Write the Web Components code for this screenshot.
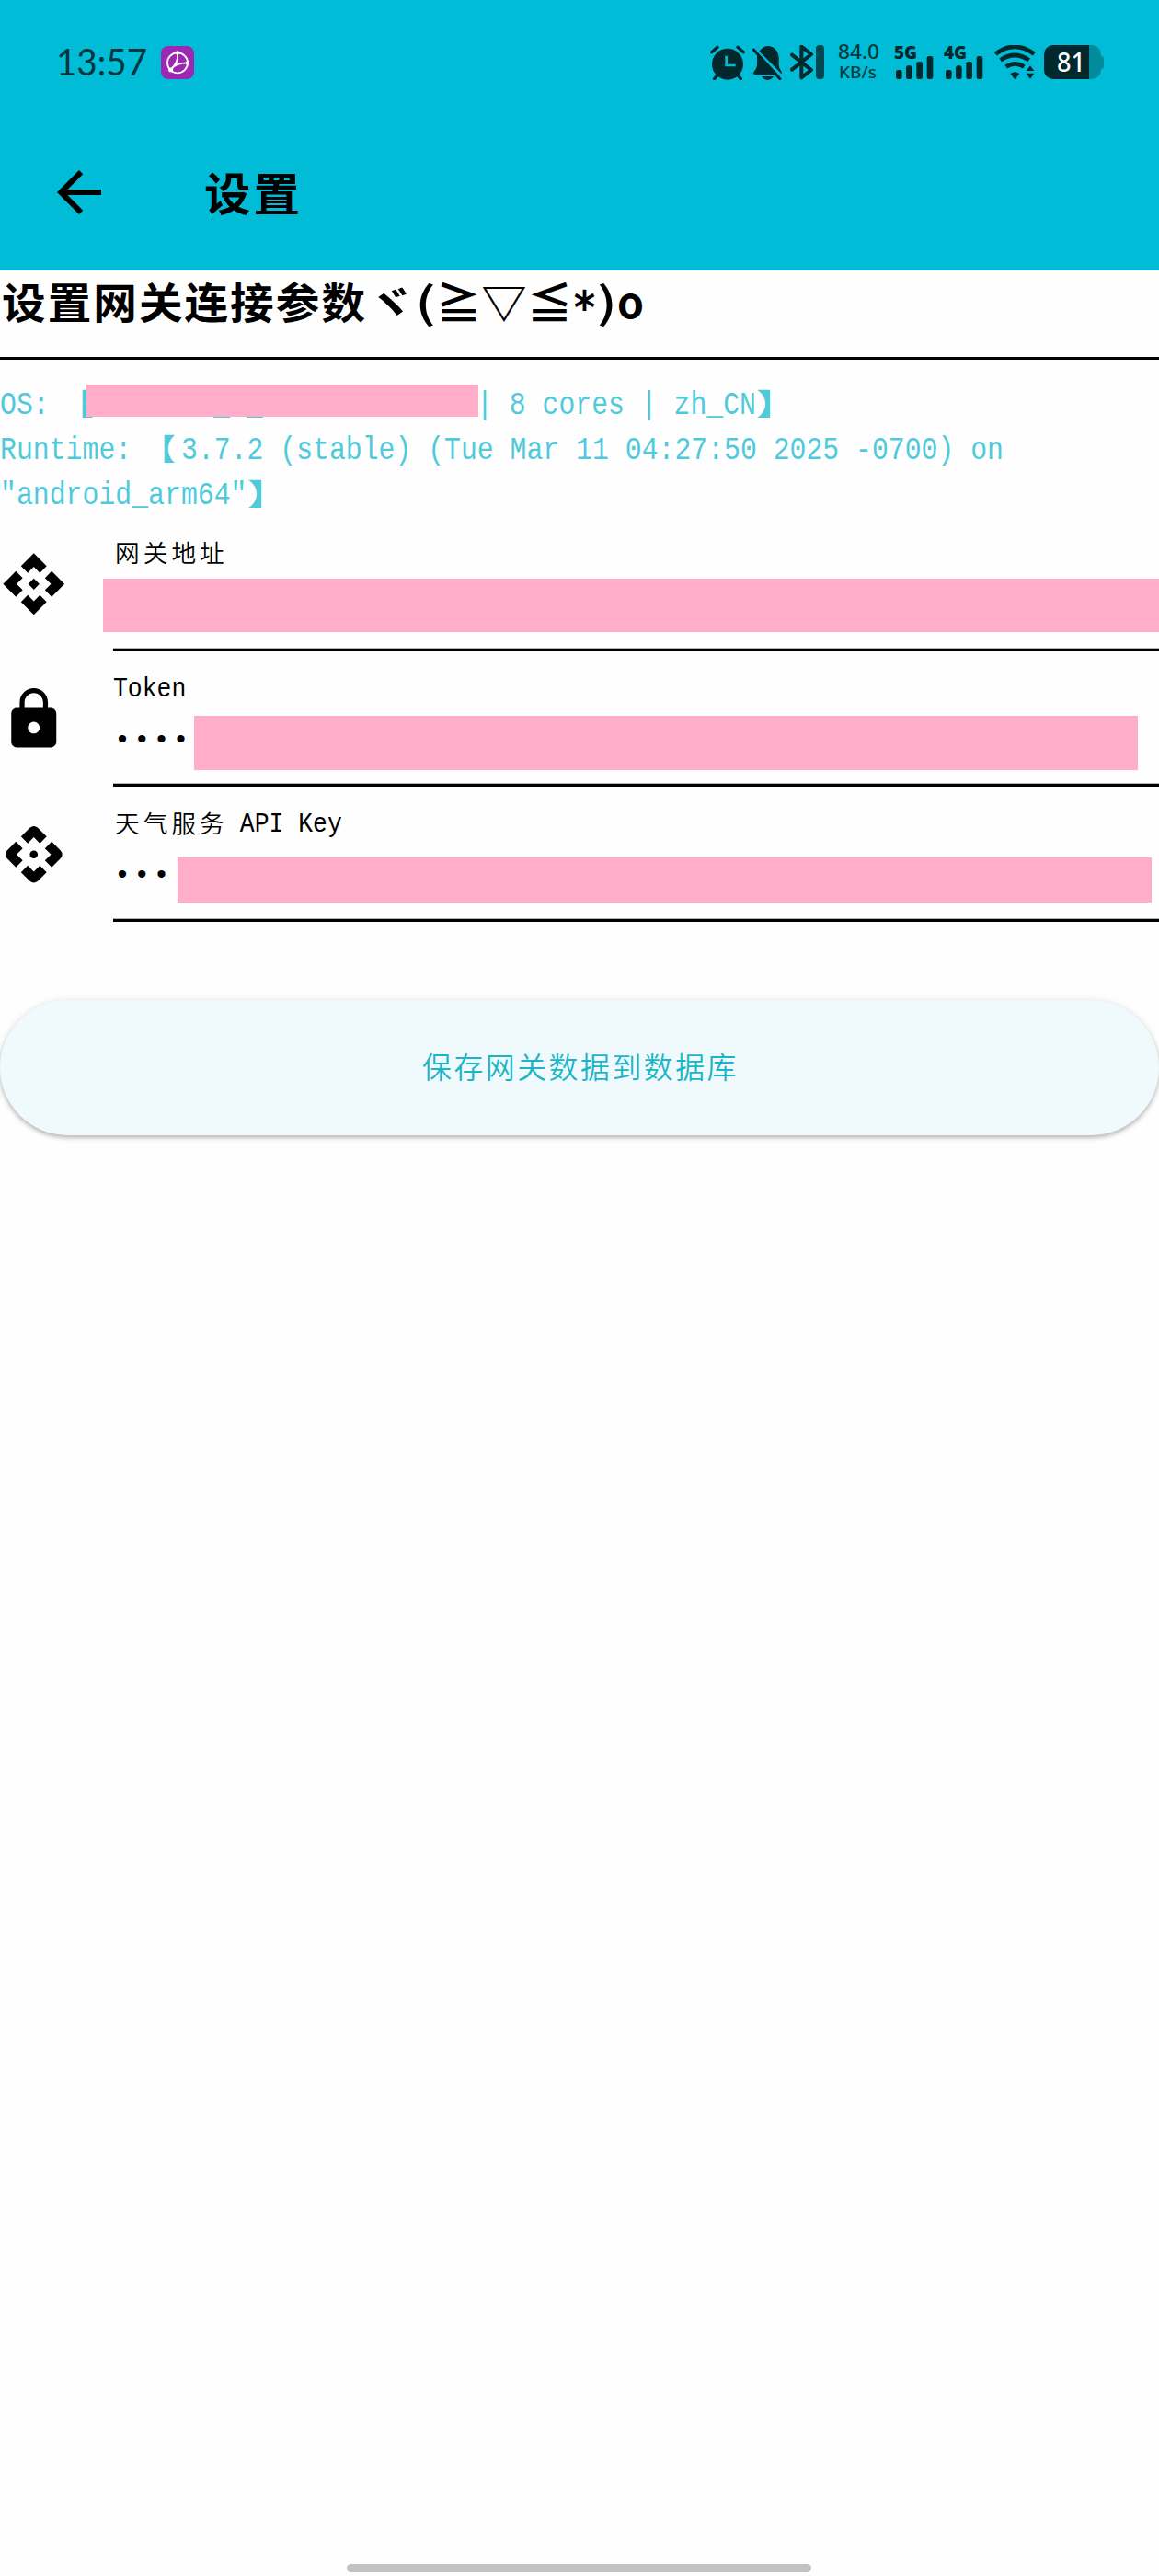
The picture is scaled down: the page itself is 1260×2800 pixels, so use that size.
<!DOCTYPE html>
<html lang="zh-CN">
<head>
<meta charset="utf-8">
<title>设置</title>
<style>
html, body { margin: 0; background: #fefefe; }
body { width: 1260px; height: 2800px; overflow: hidden; }
</style>
</head>
<body>
<settings-page></settings-page>
<script>
const define = (name, html, setup) => customElements.define(name, class extends HTMLElement {
  connectedCallback() {
    if (this.shadowRoot) return;
    const t = document.createElement('template');
    t.innerHTML = typeof html === 'function' ? html(this) : html;
    this.attachShadow({ mode: 'open' }).append(t.content.cloneNode(true));
    if (setup) setup(this);
  }
});

const roundArm = [0, 90, 180, 270].map(r => `<path transform="rotate(${r} 12 12)" d="M12 5.9l2.15 2.15 2.4-2.4-3.15-3.15q-1.4-1.15-2.8 0L7.45 5.65l2.4 2.4z"/>`).join('');
const sharpArm = [0, 90, 180, 270].map(r => `<path transform="rotate(${r} 12 12)" d="M12 5.9l2.15 2.15 2.4-2.4L12 1.1 7.45 5.65l2.4 2.4z"/>`).join('');

const ICONS = {
  back: ['0 0 24 24', '<path d="M20 11H7.83l5.59-5.59L12 4l-8 8 8 8 1.41-1.41L7.83 13H20v-2z"/>'],
  api: ['0 0 24 24', '<path d="M12 10l2 2-2 2-2-2z"/>' + sharpArm],
  apiRound: ['0 0 24 24', '<circle cx="12" cy="12" r="1.42"/>' + roundArm],
  lock: ['0 0 24 24', '<path d="M18 8h-1V6c0-2.76-2.24-5-5-5S7 3.24 7 6v2H6c-1.1 0-2 .9-2 2v10c0 1.1.9 2 2 2h12c1.1 0 2-.9 2-2V10c0-1.1-.9-2-2-2zm-6 9.1c-1.1 0-2.1-1-2.1-2.1s1-2.1 2.1-2.1 2.1 1 2.1 2.1-1 2.1-2.1 2.1zM15.3 8H8.7V6c0-1.82 1.48-3.3 3.3-3.3s3.3 1.48 3.3 3.3v2z"/>'],
  app: ['0 0 108 108', '<rect width="108" height="108" rx="24" fill="#9c27b0"/><g fill="none" stroke="#fff" stroke-width="5.5"><circle cx="54" cy="55" r="33"/><path d="M54 24Q58 54 31 78M31 78Q48 54 88 55"/></g><g fill="#fff"><circle cx="54" cy="22" r="6.5"/><circle cx="87" cy="55" r="6.5"/><circle cx="32" cy="78" r="7.5"/></g>'],
  alarm: ['60 87 114 114', '<circle cx="117" cy="149" r="51"/><path d="M65 110L84 94M169 110L150 94M83 186l-9 11M151 186l9 11" stroke="currentColor" stroke-width="10" stroke-linecap="round"/><path d="M113 122V153H143" fill="none" stroke="#00bcd7" stroke-width="8"/>'],
  bell: ['201 87 99 114', '<path d="M216 124C224 100 238 90 251 90C272 90 286 107 287 128V152Q287 163 296 174Q300 184 288 184H210Q201 182 206 173Q216 163 216 150Z"/><path d="M231 189H270Q264 200 251 201Q237 200 231 189Z"/><path d="M208 98L298 190" stroke="#00bcd7" stroke-width="9"/><path d="M205 102L291 197" stroke="currentColor" stroke-width="9" stroke-linecap="round"/>'],
  bt: ['324 87 111 114', '<path d="M330 119L393 168L361 193V92L393 117L330 167" fill="none" stroke="currentColor" stroke-width="12" stroke-linejoin="round" stroke-linecap="round"/><rect x="408" y="87" width="27" height="111" rx="11" fill="#004750"/>'],
  wifi: ['359 87 135 114', '<g fill="none" stroke="currentColor" stroke-width="14"><path d="M363 116Q425 69 489 116"/><path d="M379 136Q425 104 472 136"/><path d="M397 158Q426 138 456 158"/></g><path d="M411 180Q426 169 441 180L429 196Q426 199 423 196Z"/><path d="M476 154L489 171H463ZM476 197L489 179H463Z"/>']
};

define('ui-icon', el => {
  const [box, body] = ICONS[el.getAttribute('name')];
  return `<style>:host{display:block;flex:none}svg{display:block;width:100%;height:100%}</style>
    <svg viewBox="${box}" fill="currentColor">${body}</svg>`;
});

define('signal-meter', el => `<style>
  :host{display:flex;flex-direction:column;width:44px;height:38px;flex:none;color:#00282d}
  svg{display:block;width:44px;height:25px;margin-top:-3px}
  fit-text{font:800 18.5px/15px "Open Sans"}
  </style><fit-text w="25">${el.getAttribute('label')}</fit-text>
  <svg viewBox="0 0 132 75" fill="currentColor"><rect x="6" y="45" width="20" height="30" rx="7"/><rect x="39" y="31" width="20" height="44" rx="7"/><rect x="73" y="18" width="20" height="57" rx="7"/><rect x="107" y="0" width="20" height="75" rx="7"/></svg>`);

define('battery-badge', `<style>
  :host{display:flex;align-items:center;width:65px;height:37px;flex:none}
  .cell{width:62px;height:37px;border-radius:10px;overflow:hidden;display:flex;background:#028b9d}
  .level{width:49px;background:#00282d;color:#fff;display:flex;align-items:center;justify-content:center}
  .nub{width:3px;height:14px;background:#028b9d;border-radius:0 3px 3px 0}
  fit-text{font:500 29px/37px "Noto Sans";margin:-2px 0 0 10px}
  </style><div class="cell"><div class="level"><fit-text w="31">81</fit-text></div></div><div class="nub"></div>`);

define('status-bar', `<style>
  :host{display:flex;height:102px;padding:49px 60px 0 61px;box-sizing:border-box;color:#00282d;align-items:flex-start}
  .time{font:400 41.5px/38px Lato;color:#00373e;margin-top:-2px}
  .app{width:36px;height:36px;margin:1px 0 0 15px}
  .right{margin-left:auto;display:flex;align-items:flex-start}
  .al{width:38px;height:38px}.be{width:33px;height:38px;margin-left:8px}.bt{width:37px;height:38px;margin-left:8px}
  .speed{width:45px;margin:-3px 16px 0 15px;color:#003b42;display:flex;flex-direction:column;gap:2px}
  .speed fit-text{font:500 21px/20px "Noto Sans"}
  .speed fit-text + fit-text{font-size:18.5px;line-height:20px;margin-left:1px}
  signal-meter + signal-meter{margin-left:10px}
  .wf{width:45px;height:38px;margin:0 9px 0 11px}
  </style>
  <fit-text class="time" w="99">13:57</fit-text><ui-icon class="app" name="app"></ui-icon>
  <div class="right"><ui-icon class="al" name="alarm"></ui-icon><ui-icon class="be" name="bell"></ui-icon><ui-icon class="bt" name="bt"></ui-icon>
  <div class="speed"><fit-text w="45">84.0</fit-text><fit-text w="41">KB/s</fit-text></div>
  <signal-meter label="5G"></signal-meter><signal-meter label="4G"></signal-meter>
  <ui-icon class="wf" name="wifi"></ui-icon><battery-badge></battery-badge></div>`);

define('app-bar', `<style>
  :host{display:flex;align-items:center;height:192px;padding:21px 50px 0;box-sizing:border-box;color:#000}
  ui-icon{width:72px;height:72px}
  fit-text{font:700 49px/72px "Noto Sans CJK SC",sans-serif;letter-spacing:3px;margin:-1px 0 0 100px}
  </style><ui-icon name="back"></ui-icon><fit-text w="107">设置</fit-text>`);

define('page-heading', `<style>
  :host{display:flex;height:97px;box-sizing:border-box;border-bottom:3px solid #000;padding:0 0 0 2px;color:#000}
  fit-text{font:700 46px/64px "Noto Sans CJK SC",sans-serif;letter-spacing:2px}
  .sym{font-family:"Noto Sans CJK JP",sans-serif;letter-spacing:0}
  .par{font-weight:500;letter-spacing:0}
  .star{font:700 50px/82px "DejaVu Sans Mono";letter-spacing:0}
  .o{letter-spacing:0}
  </style><fit-text w="397">设置网关连接参数</fit-text><fit-text class="sym" w="52">ヾ</fit-text><fit-text class="par" w="23">(</fit-text><fit-text class="sym" w="148">≧▽≦</fit-text><fit-text class="star" w="27">*</fit-text><fit-text class="par" w="22">)</fit-text><fit-text class="o" w="29">o</fit-text>`);

define('runtime-info', `<style>
  :host{display:flex;flex-direction:column;height:170px;padding-top:25px;box-sizing:border-box;color:#50cadb;white-space:pre}
  div{display:flex;height:49px;position:relative}
  fit-text{font:400 34.5px/49px "Liberation Mono"}
  .b{font:700 32px/43px "Noto Sans CJK SC",sans-serif}
  .open{margin:0 6px 0 -6px}
  i{position:absolute;left:94px;top:2px;width:426px;height:35px;background:#ffadc9}
  </style>
  <div><fit-text w="71.6">OS: </fit-text><fit-text class="b open" w="35.8">【</fit-text><fit-text w="715">       _ _             | 8 cores | zh_CN</fit-text><fit-text class="b" w="44">】</fit-text><i></i></div>
  <div><fit-text w="161.1">Runtime: </fit-text><fit-text class="b open" w="35.8">【</fit-text><fit-text w="894">3.7.2 (stable) (Tue Mar 11 04:27:50 2025 -0700) on</fit-text></div>
  <div><fit-text w="268.5">"android_arm64"</fit-text><fit-text class="b" w="44">】</fit-text></div>`);

define('setting-field', el => {
  const a = n => el.getAttribute(n) || '';
  const [x, y, w, h] = a('mask').split(' ');
  return `<style>
  :host{display:flex;height:147px;position:relative;color:#000}
  ui-icon{width:73.5px;height:73.5px;margin-top:36.5px}
  .body{flex:1;margin-left:49px;border-bottom:3px solid #000;box-shadow:inset 0 -1px #b4b4b4;display:flex;flex-direction:column}
  .label{display:flex;height:46px;padding-top:16px}
  .cjk{font:350 26.5px/45px "Noto Sans CJK SC",sans-serif;letter-spacing:4px;margin:0 -2px 0 2px}
  .lat{font:400 29.5px/50px "Liberation Mono";white-space:pre}
  .dots{font:400 30px/44px "Liberation Mono";letter-spacing:3.2px;margin:13px 0 0 1.5px}
  i{position:absolute;left:${x}px;top:${y}px;width:${w}px;height:${h}px;background:#ffadc9}
  </style><ui-icon name="${a('icon')}"></ui-icon><div class="body"><div class="label">
  ${a('zh') ? `<fit-text class="cjk" w="122.8">${a('zh')}</fit-text>` : ''}${a('en') ? `<fit-text class="lat" w="${a('en').length * 15.85}">${a('en')}</fit-text>` : ''}</div>
  ${a('dots') ? `<fit-text class="dots" w="${a('dots').length * 21.2}">${a('dots')}</fit-text>` : ''}</div><i></i>`;
});

define('save-button', `<style>
  :host{display:flex;align-items:center;justify-content:center;height:147px;margin-top:85px;border-radius:73.5px;background:#f0fafc;
  box-shadow:0 3px 4px rgba(0,0,0,.2),0 1px 8px rgba(0,0,0,.12);color:#1cb5c8}
  fit-text{font:350 31.5px/60px "Noto Sans CJK SC",sans-serif;letter-spacing:2.5px;margin:-5px 0 0 2px}
  </style><fit-text w="344">保存网关数据到数据库</fit-text>`);

define('settings-page', `<style>
  :host{display:flex;flex-direction:column;width:1260px;height:2800px}
  header{background:#00bcd7;height:294px}
  main{flex:1}
  footer{height:13px;display:flex;justify-content:center}
  footer div{width:505px;height:9px;border-radius:5px;background:#c2c2c2;margin-right:1px}
  </style>
  <header><status-bar></status-bar><app-bar></app-bar></header>
  <main><page-heading></page-heading><runtime-info></runtime-info>
  <setting-field icon="api" zh="网关地址" mask="112 68 1148 58"></setting-field>
  <setting-field icon="lock" en="Token" dots="••••" mask="211 70 1026 59"></setting-field>
  <setting-field icon="apiRound" zh="天气服务" en=" API Key" dots="•••" mask="193 77 1059 49"></setting-field>
  <save-button></save-button></main>
  <footer><div></div></footer>`);

/* Text whose advance is fitted horizontally to the "w" attribute, in pixels. */
define('fit-text', `<style>:host{display:block;flex:none}span{display:block;width:max-content;white-space:pre;transform-origin:0 50%}</style><span><slot></slot></span>`, el => {
  const w = parseFloat(el.getAttribute('w'));
  const s = el.shadowRoot.querySelector('span');
  const k = w / s.getBoundingClientRect().width;
  el.style.width = w + 'px';
  s.style.transform = `scaleX(${k})`;
});
</script>
</body>
</html>
